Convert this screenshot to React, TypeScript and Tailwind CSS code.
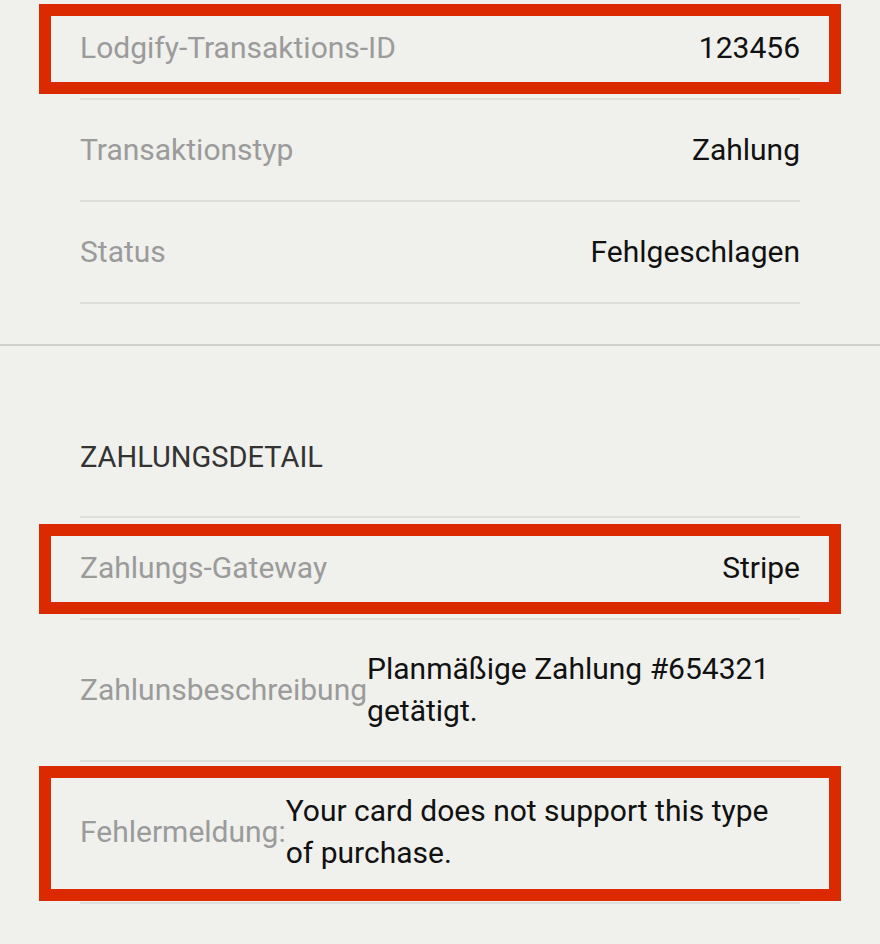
import React from "react";

type Row = { label: string; value: string; highlight?: "a" | "b" };

const top: Row[] = [
  { label: "Lodgify-Transaktions-ID", value: "123456", highlight: "a" },
  { label: "Transaktionstyp", value: "Zahlung" },
  { label: "Status", value: "Fehlgeschlagen" },
];

const detail: Row[] = [
  { label: "Zahlungs-Gateway", value: "Stripe", highlight: "a" },
  { label: "Zahlunsbeschreibung", value: "Planmäßige Zahlung #654321 getätigt." },
  { label: "Fehlermeldung:", value: "Your card does not support this type of purchase.", highlight: "b" },
];

function DetailRow({ row }: { row: Row }) {
  return (
    <div className="relative flex min-h-[102px] items-center justify-between py-[28px] border-b-2 border-[#dededb]">
      <span className="shrink-0 whitespace-nowrap text-[#9b9b9b]">{row.label}</span>
      <span className="text-left text-[#111111]">{row.value}</span>
      {row.highlight === "a" && (
        <div className="pointer-events-none absolute left-[-41px] right-[-41px] top-[6px] bottom-[4px] border-[12px] border-[#dc2a00]" />
      )}
      {row.highlight === "b" && (
        <div className="pointer-events-none absolute left-[-41px] right-[-41px] top-[4px] bottom-[1px] border-[12px] border-[#dc2a00]" />
      )}
    </div>
  );
}

export default function App() {
  return (
    <div className="min-h-screen w-full overflow-hidden bg-[#f0f0ec] font-['Roboto',sans-serif] text-[30px] leading-[42px]">
      <div className="-mt-[2px] px-[80px] pb-[40px]">
        {top.map((r) => (
          <DetailRow key={r.label} row={r} />
        ))}
      </div>
      <div className="border-t-2 border-[#cfcfcc]" />
      <div className="px-[80px] pt-[90px]">
        <div className="pb-[38px] text-[29px] uppercase text-[#333333]">Zahlungsdetail</div>
        <div className="border-t-2 border-[#dededb]">
          {detail.map((r) => (
            <DetailRow key={r.label} row={r} />
          ))}
        </div>
      </div>
    </div>
  );
}
